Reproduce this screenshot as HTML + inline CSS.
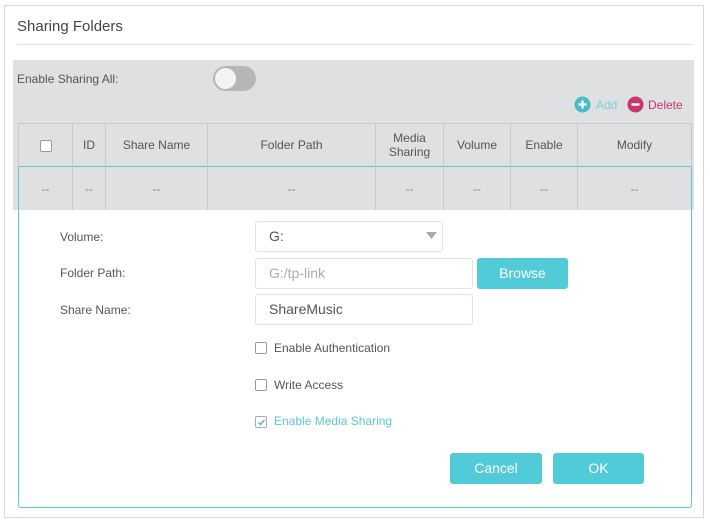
<!DOCTYPE html>
<html><head><style>
*{box-sizing:border-box;margin:0;padding:0}
body{width:710px;height:524px;background:#fff;font-family:"Liberation Sans",sans-serif;position:relative;overflow:hidden;color:#555}
.a{position:absolute}
.outer{left:4px;top:5px;width:700px;height:513px;border:1px solid #d8d8d8}
.title{left:17px;top:18px;font-size:15px;color:#444}
.hr{left:17px;top:44px;width:676px;height:1px;background:#e0e0e0}
.gray{left:13px;top:60px;width:681px;height:150px;background:#dfe0e1}
.lbl{font-size:12px;color:#555}
.tog{left:213px;top:66px;width:43px;height:25px;border-radius:13px;background:#b5b6b7}
.tog:after{content:"";position:absolute;left:2px;top:2px;width:21px;height:21px;border-radius:50%;background:#f3f3f3}
table{position:absolute;left:18px;top:123px;width:674px;border-collapse:collapse;font-size:12px;color:#555}
td{border-left:1px solid #c8c8c8;text-align:center;height:43px;line-height:14px}
td:first-child{border-left:1px solid #c8c8c8}
td:last-child{border-right:1px solid #c8c8c8}
tr.h td{border-top:1px solid #c8c8c8}
tr.r td{height:44px;border-top:1px solid #5cc7d2;color:#888}
tr.r td:first-child{border-left-color:#5cc7d2}
tr.r td:last-child{border-right-color:#5cc7d2}
.form{left:18px;top:210px;width:674px;height:298px;border:1px solid #5cc7d2;border-radius:0 0 3px 3px;background:#fff}
.inp{border:1px solid #e2e2e2;border-radius:3px;font-size:14px;color:#555;padding-left:13px;line-height:29px;height:31px}
.btn{background:#52cbd8;color:#fff;border-radius:3px;font-size:14px;text-align:center}
.cb{width:12px;height:12px;border:1px solid #999;border-radius:2px;background:#fff}
</style></head><body>
<div class="a outer"></div>
<div class="a title">Sharing Folders</div>
<div class="a hr"></div>
<div class="a gray"></div>
<div class="a lbl" style="left:17px;top:72px">Enable Sharing All:</div>
<div class="a tog"></div>
<svg class="a" style="left:574px;top:96px" width="17" height="17"><circle cx="8.5" cy="8.5" r="8" fill="#4abcc8"/><path d="M4.5 8.5h8M8.5 4.5v8" stroke="#fff" stroke-width="2.2"/></svg>
<div class="a" style="left:596px;top:98px;font-size:12px;color:#7bcfd8">Add</div>
<svg class="a" style="left:627px;top:96px" width="17" height="17"><circle cx="8.5" cy="8.5" r="8" fill="#c5386e"/><path d="M4.5 8.5h8" stroke="#fff" stroke-width="2.4"/></svg>
<div class="a" style="left:648px;top:98px;font-size:12px;color:#c5386e">Delete</div>
<table>
<tr class="h"><td style="width:54px"><span class="cb" style="display:inline-block;vertical-align:middle"></span></td><td style="width:33px">ID</td><td style="width:102px">Share Name</td><td style="width:168px">Folder Path</td><td style="width:68px">Media<br>Sharing</td><td style="width:67px">Volume</td><td style="width:67px">Enable</td><td>Modify</td></tr>
<tr class="r"><td>--</td><td>--</td><td>--</td><td>--</td><td>--</td><td>--</td><td>--</td><td>--</td></tr>
</table>
<div class="a form" style="border-top:none"></div>
<div class="a lbl" style="left:60px;top:230px">Volume:</div>
<div class="a lbl" style="left:60px;top:266px">Folder Path:</div>
<div class="a lbl" style="left:60px;top:303px">Share Name:</div>
<div class="a inp" style="left:255px;top:221px;width:188px">G:</div>
<svg class="a" style="left:426px;top:232px" width="11" height="8"><path d="M0 0h11L5.5 7z" fill="#aaa"/></svg>
<div class="a inp" style="left:255px;top:258px;width:218px;color:#aaa">G:/tp-link</div>
<div class="a btn" style="left:477px;top:258px;width:91px;height:31px;line-height:31px">Browse</div>
<div class="a inp" style="left:255px;top:294px;width:218px">ShareMusic</div>
<div class="a cb" style="left:255px;top:342px"></div>
<div class="a lbl" style="left:274px;top:341px">Enable Authentication</div>
<div class="a cb" style="left:255px;top:379px"></div>
<div class="a lbl" style="left:274px;top:378px">Write Access</div>
<div class="a cb" style="left:255px;top:416px;border-color:#aaa"></div>
<svg class="a" style="left:257px;top:418px" width="9" height="9"><path d="M1.5 4.5l2 2 4-4.5" stroke="#4abcc8" stroke-width="1.5" fill="none"/></svg>
<div class="a lbl" style="left:274px;top:414px;color:#5cc7d2">Enable Media Sharing</div>
<div class="a btn" style="left:450px;top:453px;width:92px;height:31px;line-height:31px">Cancel</div>
<div class="a btn" style="left:553px;top:453px;width:91px;height:31px;line-height:31px">OK</div>
</body></html>
